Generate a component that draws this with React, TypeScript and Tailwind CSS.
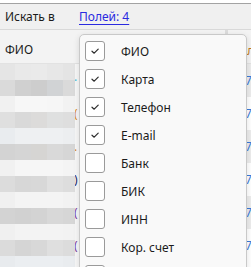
import React from "react"

const mosaic: string[][] = [
  ["bg-[#e5e5e5]", "bg-[#e9e9e9]", "bg-[#eaeaea]", "bg-[#e7e7e7]", "bg-[#e4e4e4]"],
  ["bg-[#dadada]", "bg-[#d0d0d0]", "bg-[#cdcdcd]", "bg-[#d1d3d5]", "bg-[#dadada]"],
  ["bg-[#f1f1f1]", "bg-[#f7f7f7]", "bg-[#f7f7f7]", "bg-[#f6f6f6]", "bg-[#f2f2f2]"],
  ["bg-[#dfdfdf]", "bg-[#d9d9d9]", "bg-[#dcdbda]", "bg-[#dfe0e0]", "bg-[#dedede]"],
  ["bg-[#e9ecef]", "bg-[#eef0f2]", "bg-[#eef0f2]", "bg-[#eef0f2]", "bg-[#eceef0]"],
  ["bg-[#d3d3d3]", "bg-[#d5d5d5]", "bg-[#d6d5d3]", "bg-[#d9d9d9]", "bg-[#d6d6d6]"],
  ["bg-[#f1f1f1]", "bg-[#f6f6f6]", "bg-[#f6f6f6]", "bg-[#f6f6f6]", "bg-[#f4f4f4]"],
  ["bg-[#dcdcdc]", "bg-[#d7d7d7]", "bg-[#d8d8d8]", "bg-[#e0e0e0]", "bg-[#dddddd]"],
  ["bg-[#f0f0f0]", "bg-[#f4f4f4]", "bg-[#f4f4f4]", "bg-[#f4f4f4]", "bg-[#f2f2f2]"],
  ["bg-[#d3d3d3]", "bg-[#d1d1d1]", "bg-[#d3d3d3]", "bg-[#d8d8d8]", "bg-[#d6d6d6]"],
  ["bg-[#f0f0f0]", "bg-[#f3f3f3]", "bg-[#f3f3f3]", "bg-[#f3f3f3]", "bg-[#f2f2f2]"],
  ["bg-[#dbdbdb]", "bg-[#d5d5d5]", "bg-[#d8d8d8]", "bg-[#dfdfdf]", "bg-[#dcdcdc]"],
  ["bg-[#e8ebee]", "bg-[#ebeef1]", "bg-[#ebeef1]", "bg-[#ebeef1]", "bg-[#e9ecef]"],
]

// bits of cell text peeking out at the edges of the dropdown
const leftBits = [
  { ch: "·", cls: "text-[#3cc0d8]" },
  { ch: "(", cls: "text-[#d88a20]" },
  { ch: ".", cls: "text-[#d88a20]" },
  { ch: ")", cls: "text-[#1c2a6a]" },
  { ch: "(", cls: "text-[#7a3aa0]" },
  { ch: "(", cls: "text-[#7a3aa0]" },
]

const fields = [
  { label: "ФИО", on: true },
  { label: "Карта", on: true },
  { label: "Телефон", on: true },
  { label: "E-mail", on: true },
  { label: "Банк", on: false },
  { label: "БИК", on: false },
  { label: "ИНН", on: false },
  { label: "Кор. счет", on: false },
  { label: "Счет", on: false },
]

function Check() {
  return (
    <svg width="10" height="10" viewBox="0 0 10 10" fill="none">
      <polyline points="2,5.2 4.2,7.2 8.2,3.2" stroke="#2b2b2b" strokeWidth="1.2" strokeLinecap="round" strokeLinejoin="round" />
    </svg>
  )
}

export default function App() {
  return (
    <div className="relative w-[251px] h-[267px] overflow-hidden bg-white text-[12px] text-[#1b1b1b] font-['Noto_Sans',sans-serif]">
      <div className="h-[3px] bg-white" />

      {/* toolbar */}
      <div className="h-[27px] flex items-center bg-[#f0f0f0] border-t border-[#a3a3a3] border-b border-b-[#d9d9d9]">
        <span className="w-[79px] pl-[5px] pt-[1px]">Искать в</span>
        <span className="pt-[1px] text-[#2a2ae0] underline underline-offset-[3px]">Полей: 4</span>
      </div>

      {/* table header */}
      <div className="h-[34px] flex bg-[#f3f3f3] border-b border-[#e2e2e2]">
        <div className="w-[225px] pl-[5px] pt-[11px]">ФИО</div>
        <div className="w-[3px] bg-[#dcdcdc]" />
        <div className="flex-1" />
        <div className="w-[4px] overflow-hidden pt-[15px] text-[#c07a20] leading-none">
          <span className="block">л</span>
        </div>
      </div>

      {/* table body */}
      <div className="flex">
        <div className="w-[75px]">
          {mosaic.map((row, i) => (
            <div key={i} className="grid grid-cols-[15px_16px_16px_16px_12px] h-[16px]">
              {row.map((c, j) => (
                <div key={j} className={c} />
              ))}
            </div>
          ))}
        </div>
        <div className="w-[4px] overflow-hidden bg-[#f7f7f7]">
          {leftBits.map((b, i) => (
            <div key={i} className={`h-[33px] flex items-center leading-none ${b.cls}`}>
              <span className="-ml-[1px]">{b.ch}</span>
            </div>
          ))}
        </div>
        <div className="flex-1 bg-white" />
        <div className="w-[4px] overflow-hidden">
          {leftBits.map((_, i) => (
            <div key={i} className={`h-[33px] flex items-center ${i % 2 === 0 ? "bg-[#ececec]" : "bg-white"}`}>
              <span className="-ml-[2px] text-[#3a7ad8] leading-none">7</span>
            </div>
          ))}
        </div>
      </div>

      {/* fields dropdown */}
      <div className="absolute left-[79px] top-[34px] w-[168px] h-[260px] bg-[#f9f9f9] border border-[#c9c9c9] rounded-[5px] shadow-[0_2px_6px_rgba(0,0,0,0.12)] pt-[2px] pl-[5px]">
        {fields.map((f) => (
          <div key={f.label} className="h-[28px] flex items-center">
            <div className="w-[20px] h-[20px] rounded-[3px] border border-[#9a9a9a] bg-white flex items-center justify-center">
              {f.on && <Check />}
            </div>
            <span className="ml-[16px] pt-[1px] text-[#1b1b1b]">{f.label}</span>
          </div>
        ))}
      </div>
    </div>
  )
}
